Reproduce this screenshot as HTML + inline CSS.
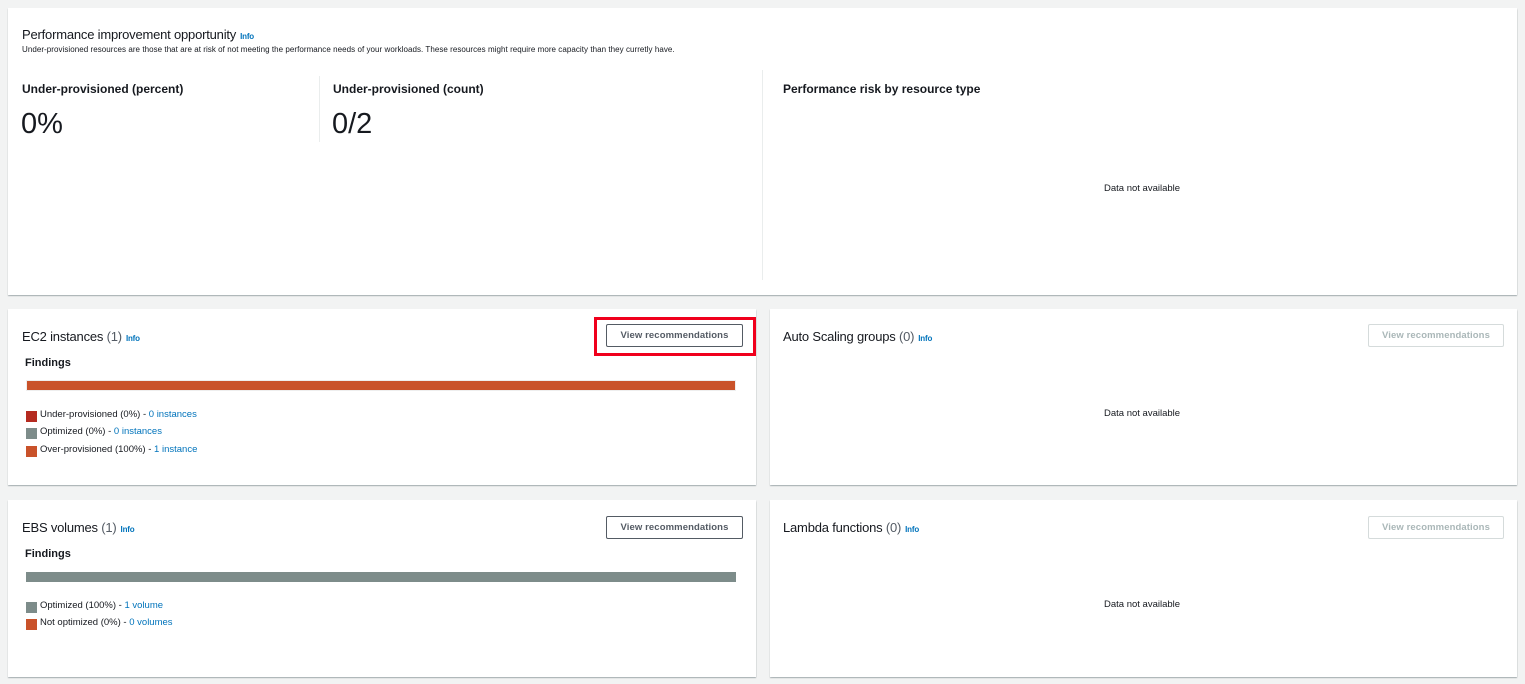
<!DOCTYPE html>
<html><head><meta charset="utf-8"><style>
body{margin:0;width:1525px;height:684px;background:#f2f3f3;font-family:"Liberation Sans",sans-serif;color:#16191f;position:relative;overflow:hidden}
.card{position:absolute;background:#fff;box-shadow:0 1px 1px rgba(0,28,36,.3),1px 1px 1px -1px rgba(0,28,36,.2);}
.a{position:absolute;white-space:nowrap}
.t{font-size:13px;letter-spacing:-0.2px}
.t .c{color:#545b64}
.info{color:#0073bb;font-size:8px;font-weight:bold;margin-left:4px}
.btn{position:absolute;border:1px solid #545b64;border-radius:2px;font-size:9.5px;font-weight:bold;color:#545b64;text-align:center;line-height:22px;background:#fff;letter-spacing:.1px;box-sizing:border-box}
.btn.d{border-color:#d5dbdb;color:#aab7b8}
.lg{font-size:9.5px;color:#16191f;line-height:11px}
.lg a{color:#0073bb;text-decoration:none}
.sq{position:absolute;width:11px;height:11px}
.na{font-size:9.5px;color:#16191f}
.b{font-weight:bold}
</style></head><body>
<div class="card" style="left:8px;top:8px;width:1509px;height:287px"></div>
<div class="a t" style="left:22px;top:27px">Performance improvement opportunity<span class="info">Info</span></div>
<div class="a" style="left:22px;top:45px;font-size:8px;letter-spacing:.05px;color:#16191f">Under-provisioned resources are those that are at risk of not meeting the performance needs of your workloads. These resources might require more capacity than they curretly have.</div>
<div class="a b" style="left:22px;top:82px;font-size:12px">Under-provisioned (percent)</div>
<div class="a" style="left:21px;top:108px;font-size:29px;font-weight:300">0%</div>
<div class="a" style="left:319px;top:76px;width:1px;height:66px;background:#eaeded"></div>
<div class="a b" style="left:333px;top:82px;font-size:12px">Under-provisioned (count)</div>
<div class="a" style="left:332px;top:108px;font-size:29px">0/2</div>
<div class="a" style="left:762px;top:70px;width:1px;height:210px;background:#eaeded"></div>
<div class="a b" style="left:783px;top:82px;font-size:12px">Performance risk by resource type</div>
<div class="a na" style="left:1104px;top:183px">Data not available</div>

<div class="card" style="left:8px;top:309px;width:748px;height:176px"></div>
<div class="a t" style="left:22px;top:329px">EC2 instances <span class="c">(1)</span><span class="info">Info</span></div>
<div class="btn" style="left:606px;top:324px;width:137px;height:23px">View recommendations</div>
<div class="a" style="left:594px;top:317px;width:156px;height:33px;border:3px solid #f0001c"></div>
<div class="a b" style="left:25px;top:357px;font-size:11px">Findings</div>
<div class="a" style="left:26px;top:380px;width:710px;height:11px;background:#c9522a;border:1px solid #eee;box-sizing:border-box"></div>
<div class="sq" style="left:26px;top:411px;background:#b52b20"></div><div class="a lg" style="left:40px;top:409px">Under-provisioned (0%) - <a>0 instances</a></div>
<div class="sq" style="left:26px;top:428px;background:#7d8c8a"></div><div class="a lg" style="left:40px;top:426px">Optimized (0%) - <a>0 instances</a></div>
<div class="sq" style="left:26px;top:446px;background:#c9522a"></div><div class="a lg" style="left:40px;top:444px">Over-provisioned (100%) - <a>1 instance</a></div>

<div class="card" style="left:770px;top:309px;width:747px;height:176px"></div>
<div class="a t" style="left:783px;top:329px">Auto Scaling groups <span class="c">(0)</span><span class="info">Info</span></div>
<div class="btn d" style="left:1368px;top:324px;width:136px;height:23px">View recommendations</div>
<div class="a na" style="left:1104px;top:408px">Data not available</div>

<div class="card" style="left:8px;top:500px;width:748px;height:177px"></div>
<div class="a t" style="left:22px;top:520px">EBS volumes <span class="c">(1)</span><span class="info">Info</span></div>
<div class="btn" style="left:606px;top:516px;width:137px;height:23px">View recommendations</div>
<div class="a b" style="left:25px;top:548px;font-size:11px">Findings</div>
<div class="a" style="left:26px;top:572px;width:710px;height:10px;background:#7d8c8a"></div>
<div class="sq" style="left:26px;top:602px;background:#7d8c8a"></div><div class="a lg" style="left:40px;top:600px">Optimized (100%) - <a>1 volume</a></div>
<div class="sq" style="left:26px;top:619px;background:#c9522a"></div><div class="a lg" style="left:40px;top:617px">Not optimized (0%) - <a>0 volumes</a></div>

<div class="card" style="left:770px;top:500px;width:747px;height:177px"></div>
<div class="a t" style="left:783px;top:520px">Lambda functions <span class="c">(0)</span><span class="info">Info</span></div>
<div class="btn d" style="left:1368px;top:516px;width:136px;height:23px">View recommendations</div>
<div class="a na" style="left:1104px;top:599px">Data not available</div>
</body></html>
